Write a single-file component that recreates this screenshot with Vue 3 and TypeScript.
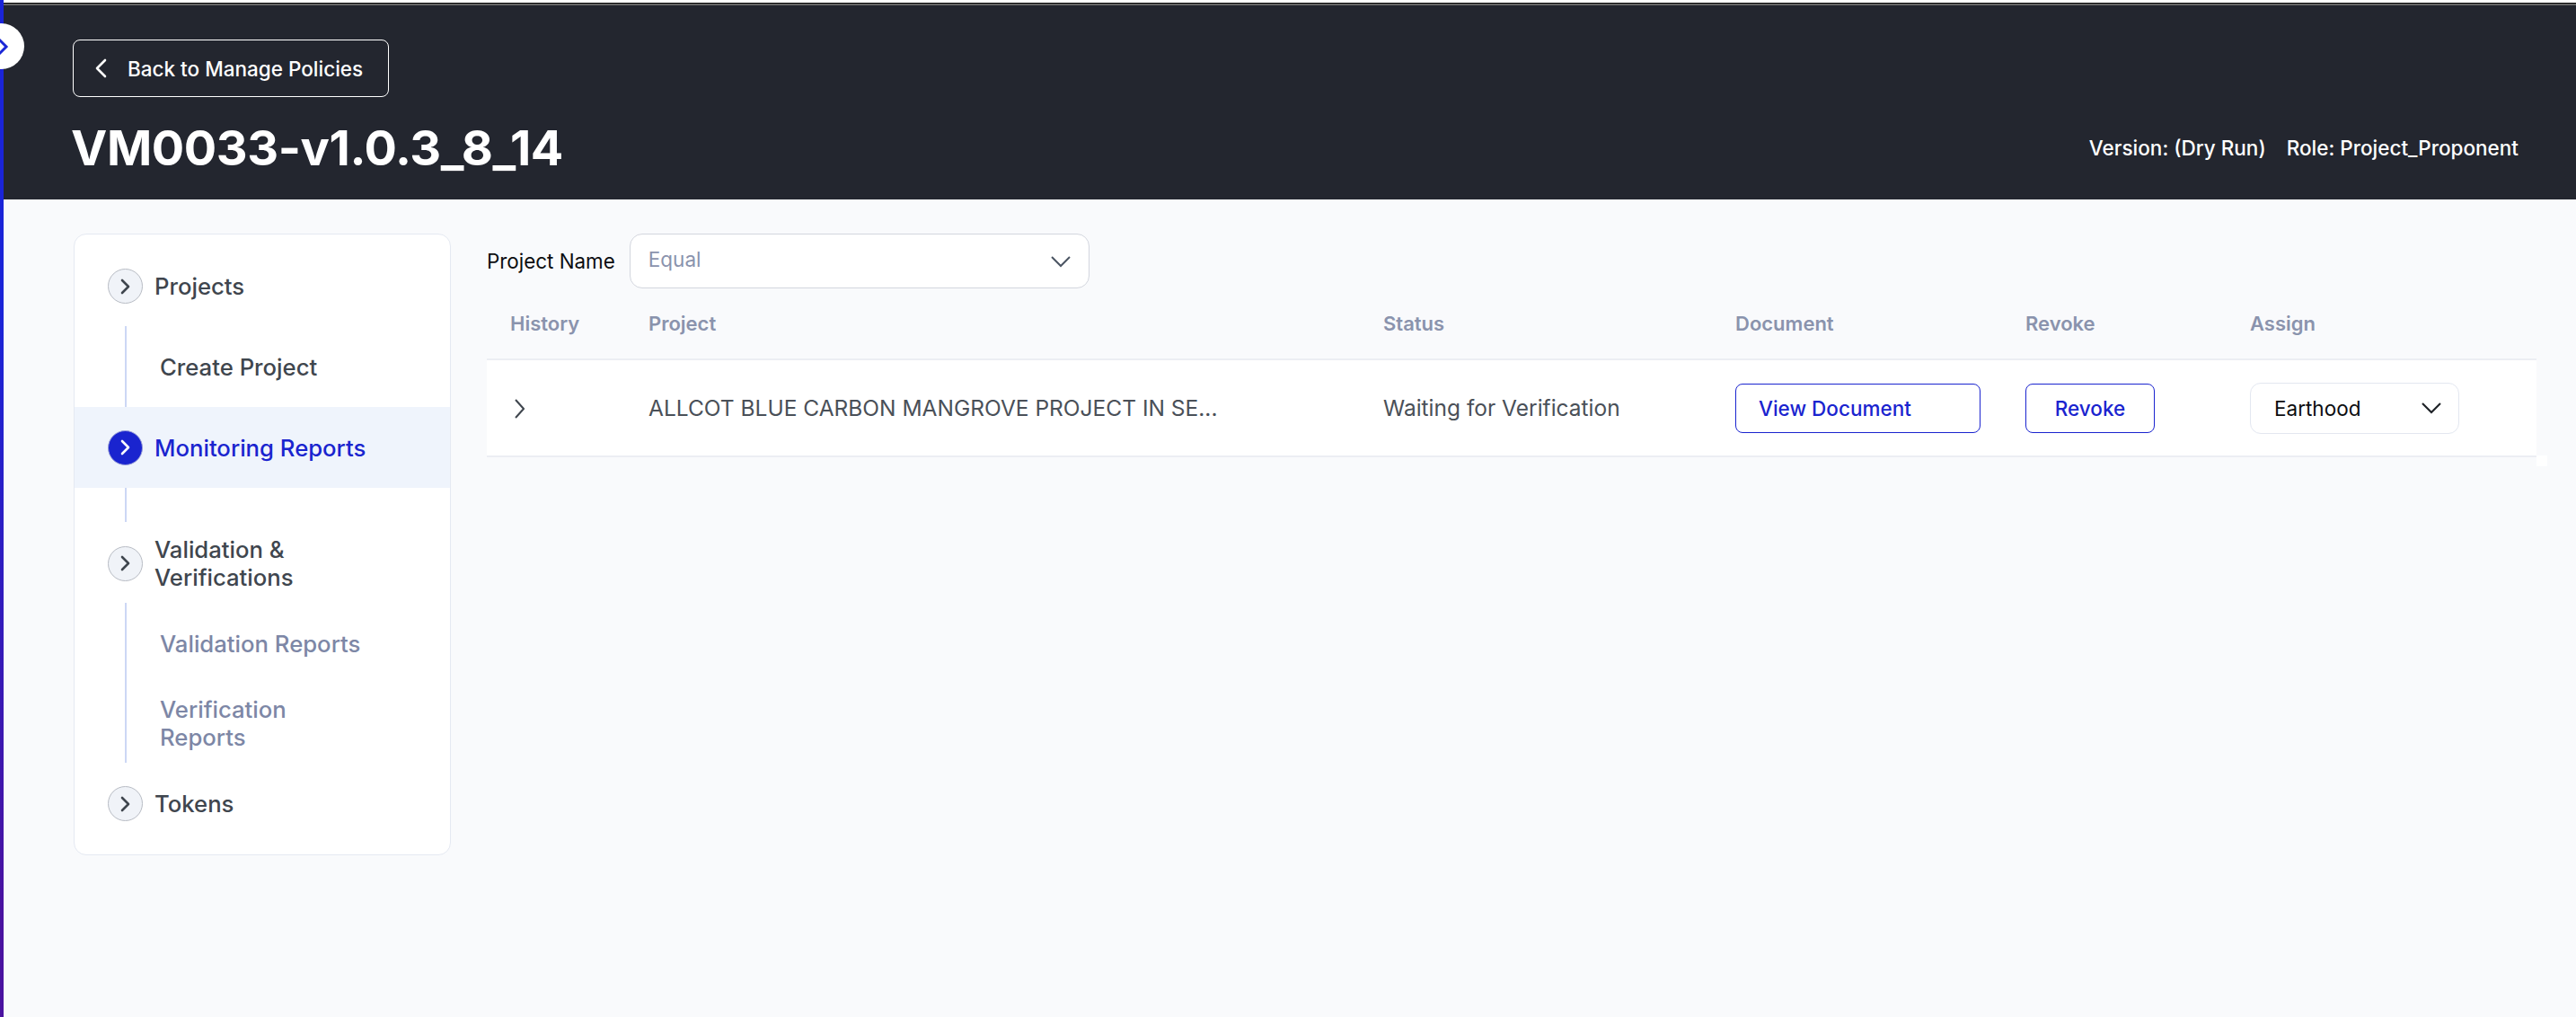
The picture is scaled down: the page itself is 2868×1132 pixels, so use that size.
<script setup lang="ts">
interface Col { key: string; label: string }
const cols: Col[] = [
  { key: 'history', label: 'History' },
  { key: 'project', label: 'Project' },
  { key: 'status', label: 'Status' },
  { key: 'document', label: 'Document' },
  { key: 'revoke', label: 'Revoke' },
  { key: 'assign', label: 'Assign' },
]
</script>

<template>
  <div class="page">
    <span class="strip"></span>
    <button class="collapse" type="button">
      <svg width="14" height="22" viewBox="0 0 14 22"><path d="M2 3l8 8-8 8" fill="none" stroke="#1a27d6" stroke-width="3" /></svg>
    </button>
    <header class="topbar">
      <button class="back" type="button">
        <svg width="14" height="24" viewBox="0 0 14 24"><path d="M12 3L3 12l9 9" fill="none" stroke="#fff" stroke-width="2.6" stroke-linecap="round" stroke-linejoin="round" /></svg>
        <span>Back to Manage Policies</span>
      </button>
      <div class="title-row">
        <h1>VM0033-v1.0.3_8_14</h1>
        <div class="meta">
          <span>Version: (Dry Run)</span>
          <span>Role: Project_Proponent</span>
        </div>
      </div>
    </header>

    <div class="content">
      <aside class="card">
        <div class="group">
          <span class="dot"><svg width="14" height="18" viewBox="0 0 14 18"><path d="M3 2l7 7-7 7" fill="none" stroke="#3f464e" stroke-width="2.6" stroke-linecap="round" stroke-linejoin="round" /></svg></span>
          <span>Projects</span>
        </div>
        <ul class="sub sub-first">
          <li class="sub-dark">Create Project</li>
        </ul>
        <div class="group active">
          <span class="dot dot-on"><svg width="14" height="18" viewBox="0 0 14 18"><path d="M3 2l7 7-7 7" fill="none" stroke="#fff" stroke-width="2.6" stroke-linecap="round" stroke-linejoin="round" /></svg></span>
          <span>Monitoring Reports</span>
        </div>
        <div class="stub"></div>
        <div class="group group-two">
          <span class="dot"><svg width="14" height="18" viewBox="0 0 14 18"><path d="M3 2l7 7-7 7" fill="none" stroke="#3f464e" stroke-width="2.6" stroke-linecap="round" stroke-linejoin="round" /></svg></span>
          <span>Validation &amp;<br />Verifications</span>
        </div>
        <ul class="sub sub-second">
          <li>Validation Reports</li>
          <li>Verification<br />Reports</li>
        </ul>
        <div class="group">
          <span class="dot"><svg width="14" height="18" viewBox="0 0 14 18"><path d="M3 2l7 7-7 7" fill="none" stroke="#3f464e" stroke-width="2.6" stroke-linecap="round" stroke-linejoin="round" /></svg></span>
          <span>Tokens</span>
        </div>
      </aside>

      <main class="main">
        <div class="filter">
          <label>Project Name</label>
          <div class="select">
            <span>Equal</span>
            <svg width="24" height="14" viewBox="0 0 24 14"><path d="M2 2l10 10L22 2" fill="none" stroke="#4b5563" stroke-width="2" /></svg>
          </div>
        </div>

        <div class="thead">
          <div v-for="c in cols" :key="c.key" :class="['cell', c.key]">{{ c.label }}</div>
        </div>
        <div class="row">
          <div class="cell history">
            <svg width="12" height="24" viewBox="0 0 12 24"><path d="M2 2l9 10-9 10" fill="none" stroke="#3f464e" stroke-width="2" /></svg>
          </div>
          <div class="cell project">ALLCOT BLUE CARBON MANGROVE PROJECT IN SE...</div>
          <div class="cell status">Waiting for Verification</div>
          <div class="cell document"><button class="btn btn-doc" type="button">View Document</button></div>
          <div class="cell revoke"><button class="btn btn-rev" type="button">Revoke</button></div>
          <div class="cell assign">
            <div class="assign-select">
              <span>Earthood</span>
              <svg width="24" height="14" viewBox="0 0 24 14"><path d="M2 2l10 10L22 2" fill="none" stroke="#1f2328" stroke-width="2.2" /></svg>
            </div>
          </div>
          <span class="corner"></span>
        </div>
      </main>
    </div>
  </div>
</template>

<style>
html, body { margin: 0; background: #f9fafc; }
</style>

<style scoped>
.page {
  position: relative;
  box-sizing: border-box;
  height: 1132px;
  overflow: hidden;
  background: #f9fafc;
  font-family: Inter, "Liberation Sans", sans-serif;
}
.strip {
  position: absolute;
  z-index: 1;
  left: 0;
  top: 0;
  bottom: 0;
  width: 4px;
  background: linear-gradient(180deg, #1a24d8 0%, #1a24d8 30%, #4a12a0 90%, #4a12a0 100%);
}
.collapse {
  position: absolute;
  z-index: 2;
  left: -24px;
  top: 26px;
  width: 51px;
  height: 51px;
  padding: 0 0 0 21px;
  border: 0;
  border-radius: 50%;
  background: #fff;
  display: flex;
  align-items: center;
  justify-content: flex-start;
}
.topbar {
  box-sizing: border-box;
  height: 222px;
  background: #23262f;
  border-top: 3px solid #fff;
  box-shadow: inset 0 1px 0 #000, inset 0 3px 0 #666;
  padding: 41px 64px 0 81px;
  color: #fff;
}
.back {
  box-sizing: border-box;
  width: 352px;
  height: 64px;
  display: flex;
  align-items: center;
  gap: 23px;
  padding: 0 0 0 23px;
  background: transparent;
  border: 1.5px solid #fff;
  border-radius: 8px;
  color: #fff;
  font: 500 22.5px Inter, sans-serif;
}
.title-row {
  display: flex;
  align-items: center;
  justify-content: space-between;
  margin-top: 19px;
  height: 74px;
}
h1 {
  margin: 0 0 0 -2px;
  font: 700 54px Inter, sans-serif;
  letter-spacing: -0.4px;
}
.meta {
  display: flex;
  gap: 23px;
  font: 500 22.5px Inter, sans-serif;
}
.content {
  display: flex;
  gap: 40px;
  padding: 38px 44px 0 82px;
}
.card {
  box-sizing: border-box;
  width: 420px;
  height: 692px;
  padding-top: 38px;
  background: #fff;
  border: 1.5px solid #e5e9f2;
  border-radius: 14px;
  color: #3f464e;
  font-size: 25.7px;
  font-weight: 500;
  line-height: 31px;
}
.group {
  display: flex;
  align-items: center;
  gap: 13px;
  padding-left: 37px;
  min-height: 39px;
}
.dot {
  box-sizing: border-box;
  flex: none;
  width: 39px;
  height: 39px;
  border: 1.5px solid #b8bcc4;
  border-radius: 50%;
  background: #f0f3f8;
  display: flex;
  align-items: center;
  justify-content: center;
}
.dot-on {
  background: #1a24cf;
  border-color: #9aa0d8;
}
.active {
  height: 90px;
  background: #eff4fc;
  color: #1a24cf;
}
.group-two {
  margin-top: 15px;
}
.stub {
  width: 2px;
  height: 38px;
  margin-left: 56px;
  background: #ccd7f5;
}
.sub {
  list-style: none;
  margin: 0 0 0 56px;
  padding: 0 0 0 37px;
  border-left: 2px solid #ccd7f5;
  color: #7d87a6;
  font-weight: 500;
}
.sub li {
  min-height: 90px;
  display: flex;
  align-items: center;
}
.sub-first { margin-top: 25px; }
.sub-second { margin-top: 13px; margin-bottom: 26px; }
.sub-second li + li { min-height: 88px; }
.sub-dark { color: #3f464e; }
.main {
  flex: 1;
  min-width: 0;
}
.filter {
  display: flex;
  align-items: center;
  gap: 16px;
  height: 61px;
}
.filter label {
  color: #0c0d10;
  font-size: 22.4px;
}
.select {
  box-sizing: border-box;
  width: 512px;
  height: 61px;
  display: flex;
  align-items: center;
  justify-content: space-between;
  padding: 0 19px 4px 20px;
  background: #fff;
  border: 1.5px solid #d3d6de;
  border-radius: 14px;
  color: #8a93ad;
  font-size: 22.5px;
}
.select svg { margin-top: 4px; }
.thead, .row {
  display: grid;
  grid-template-columns: 180px 818px 392px 323px 250px 319px;
  align-items: center;
}
.thead {
  height: 78px;
  color: #8a93ad;
  font-size: 22px;
  font-weight: 600;
}
.row {
  position: relative;
  box-sizing: border-box;
  height: 110px;
  background: #fff;
  border-top: 2px solid #eceef3;
  border-bottom: 2px solid #eceef3;
  color: #4a5058;
  font-size: 24.5px;
}
.cell.history { padding-left: 26px; }
.row .cell.history { display: flex; padding-top: 2px; padding-left: 30px; }
.btn {
  box-sizing: border-box;
  height: 55px;
  background: #fff;
  border: 1.5px solid #1a24cf;
  border-radius: 8px;
  color: #1a24cf;
  font: 500 22.5px Inter, sans-serif;
}
.btn-doc {
  width: 273px;
  text-align: left;
  padding-left: 25px;
}
.btn-rev {
  width: 144px;
  text-align: center;
  padding: 0;
}
.assign-select {
  box-sizing: border-box;
  width: 233px;
  height: 57px;
  display: flex;
  align-items: center;
  justify-content: space-between;
  padding: 0 18px 0 26px;
  background: #fff;
  border: 1.5px solid #e3e7f0;
  border-radius: 12px;
  color: #0c0d10;
  font-size: 22.5px;
}
.corner {
  position: absolute;
  left: 100%;
  top: 100%;
  width: 12px;
  height: 12px;
  background: #fff;
}
</style>
